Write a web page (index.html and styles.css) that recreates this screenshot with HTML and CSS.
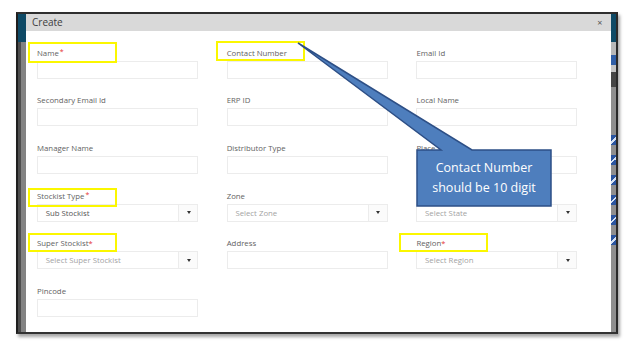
FILE: index.html
```html
<!DOCTYPE html>
<html>
<head>
<meta charset="utf-8">
<link rel="stylesheet" href="styles.css">
</head>
<body>
<div class="shot">
  <div class="side-left"><div class="side-teal"></div></div>
  <div class="dialog">
    <div class="dlg-head"><span class="dlg-title">Create</span><span class="dlg-close">×</span></div>
    <div class="dlg-body">
      <div class="form-grid">
        <div class="field"><div class="lbl">Name<sup class="req">*</sup></div><div class="ctl"></div></div>
        <div class="field"><div class="lbl">Contact Number</div><div class="ctl"></div></div>
        <div class="field"><div class="lbl">Email Id</div><div class="ctl"></div></div>

        <div class="field"><div class="lbl">Secondary Email Id</div><div class="ctl"></div></div>
        <div class="field"><div class="lbl">ERP ID</div><div class="ctl"></div></div>
        <div class="field"><div class="lbl">Local Name</div><div class="ctl"></div></div>

        <div class="field"><div class="lbl">Manager Name</div><div class="ctl"></div></div>
        <div class="field"><div class="lbl">Distributor Type</div><div class="ctl"></div></div>
        <div class="field"><div class="lbl">Place</div><div class="ctl"></div></div>

        <div class="field"><div class="lbl">Stockist Type<sup class="req">*</sup></div><div class="ctl sel"><span class="sel-val">Sub Stockist</span><span class="sel-btn"><i class="caret"></i></span></div></div>
        <div class="field"><div class="lbl">Zone</div><div class="ctl sel"><span class="sel-val ph">Select Zone</span><span class="sel-btn"><i class="caret"></i></span></div></div>
        <div class="field"><div class="lbl"></div><div class="ctl sel"><span class="sel-val ph">Select State</span><span class="sel-btn"><i class="caret"></i></span></div></div>

        <div class="field"><div class="lbl">Super Stockist<span class="req-in">*</span></div><div class="ctl sel"><span class="sel-val ph">Select Super Stockist</span><span class="sel-btn"><i class="caret"></i></span></div></div>
        <div class="field"><div class="lbl">Address</div><div class="ctl"></div></div>
        <div class="field"><div class="lbl">Region<span class="req-in">*</span></div><div class="ctl sel"><span class="sel-val ph">Select Region</span><span class="sel-btn"><i class="caret"></i></span></div></div>

        <div class="field"><div class="lbl">Pincode</div><div class="ctl"></div></div>
      </div>
    </div>
  </div>
  <div class="side-right">
    <div class="sr-teal"></div>
    <div class="sr-light"></div>
    <div class="sr-blue"></div>
    <div class="sr-gap"></div>
    <div class="sr-dark"></div>
    <div class="sr-grey">
      <i class="chk"></i><i class="chk"></i><i class="chk"></i><i class="chk"></i><i class="chk"></i><i class="chk"></i>
    </div>
  </div>
</div>

<div class="mark mark-name"></div>
<div class="mark mark-contact"></div>
<div class="mark mark-stype"></div>
<div class="mark mark-super"></div>
<div class="mark mark-region"></div>

<div class="callout">
  <svg class="callout-shape" width="265" height="172" viewBox="0 0 265 172">
    <path d="M127 112 L151 112 L8 5 L182 112 L261 112 L261 168 L127 168 Z" fill="#4e7ebd" stroke="#2d4f86" stroke-width="1.5" stroke-linejoin="miter"/>
  </svg>
  <div class="callout-text">Contact Number<br>should be 10 digit</div>
</div>
</body>
</html>
```

FILE: styles.css
```css
* { box-sizing: border-box; }

html, body {
  margin: 0;
  padding: 0;
  background: #ffffff;
}

body {
  position: relative;
  width: 644px;
  height: 342px;
  overflow: hidden;
  font-family: "Open Sans", "Liberation Sans", sans-serif;
}

.shot {
  margin: 12px 0 0 16px;
  width: 602px;
  height: 322px;
  display: flex;
  border-top: 2px solid #2e2e2e;
  border-left: 2px solid #1e1e1e;
  border-right: 2px solid #2a2a2a;
  border-bottom: 2px solid #333333;
  box-shadow: 2px 3px 3px rgba(0, 0, 0, 0.35);
}

.side-left {
  width: 8px;
  flex: none;
  background: linear-gradient(to right, #4d4d4d 0, #4d4d4d 3px, #838383 3px, #838383 100%);
}

.side-teal {
  height: 28px;
  background: #0e4a66;
}

.dialog {
  flex: 1;
  display: flex;
  flex-direction: column;
  background: #ffffff;
}

.dlg-head {
  height: 17px;
  background: #d9d9d9;
  display: flex;
  align-items: center;
  justify-content: space-between;
  padding: 0 9px 0 6px;
}

.dlg-title {
  font-size: 10px;
  color: #3d3d3d;
  line-height: 17px;
}

.dlg-close {
  font-size: 9px;
  color: #555;
  line-height: 17px;
}

.dlg-body {
  padding: 16.7px 34px 0 11px;
}

.form-grid {
  display: grid;
  grid-template-columns: 161px 161px 161px;
  column-gap: 28.7px;
  row-gap: 16.7px;
}

.field {
  display: flex;
  flex-direction: column;
}

.lbl {
  height: 10px;
  line-height: 10px;
  font-size: 7.8px;
  color: #626262;
  margin-bottom: 3px;
  white-space: nowrap;
}

.req {
  color: #e53333;
  font-size: 7px;
  vertical-align: 0;
  position: relative;
  top: -2px;
  margin-left: 1px;
}

.req-in {
  color: #e53333;
  font-size: 7.5px;
}

.ctl {
  height: 18px;
  border: 1px solid #ececec;
  background: #ffffff;
}

.sel {
  display: flex;
  align-items: stretch;
}

.sel-val {
  flex: 1;
  padding-left: 7.7px;
  font-size: 7.8px;
  line-height: 16px;
  color: #545454;
  white-space: nowrap;
}

.sel-val.ph {
  color: #a3a3a3;
}

.sel-btn {
  width: 19px;
  flex: none;
  border-left: 1px solid #ececec;
  background: #fbfbfb;
  display: flex;
  align-items: center;
  justify-content: center;
}

.caret {
  width: 0;
  height: 0;
  border-left: 2.7px solid transparent;
  border-right: 2.7px solid transparent;
  border-top: 3px solid #333;
  margin-left: 1px;
}

.side-right {
  width: 5px;
  flex: none;
  display: flex;
  flex-direction: column;
  background: #8d8d8d;
}

.sr-teal { height: 28px; background: #0e4a66; }
.sr-light { height: 13px; background: #b8b8b8; }
.sr-blue { height: 10px; background: #2f5ea6; }
.sr-gap { height: 7px; background: #c4c4c4; }
.sr-dark { height: 15px; background: #454545; }

.sr-grey {
  flex: 1;
  display: flex;
  flex-direction: column;
  gap: 10px;
  padding-top: 48px;
  background: #8f8f8f;
}

.chk {
  display: block;
  height: 10px;
  background: linear-gradient(135deg, #2a55a0 0, #2a55a0 45%, #d6e2f3 45%, #d6e2f3 60%, #2a55a0 60%);
}

.mark {
  position: absolute;
  border: 2.2px solid #fbf700;
}

.mark-name { left: 27.7px; top: 42px; width: 89px; height: 20.7px; }
.mark-contact { left: 215.7px; top: 40.7px; width: 89.3px; height: 20.3px; }
.mark-stype { left: 27.5px; top: 187.7px; width: 89px; height: 19.5px; }
.mark-super { left: 27.5px; top: 232.7px; width: 89px; height: 19.6px; }
.mark-region { left: 399.3px; top: 232.7px; width: 88.7px; height: 19.6px; }

.callout {
  position: absolute;
  left: 290px;
  top: 38px;
  width: 265px;
  height: 172px;
}

.callout-shape {
  display: block;
}

.callout-text {
  position: absolute;
  left: 127px;
  top: 112px;
  width: 134px;
  height: 56px;
  display: flex;
  align-items: center;
  justify-content: center;
  text-align: center;
  color: #ffffff;
  font-size: 12.5px;
  line-height: 20.5px;
  font-family: "Open Sans", "Liberation Sans", sans-serif;
}
```
